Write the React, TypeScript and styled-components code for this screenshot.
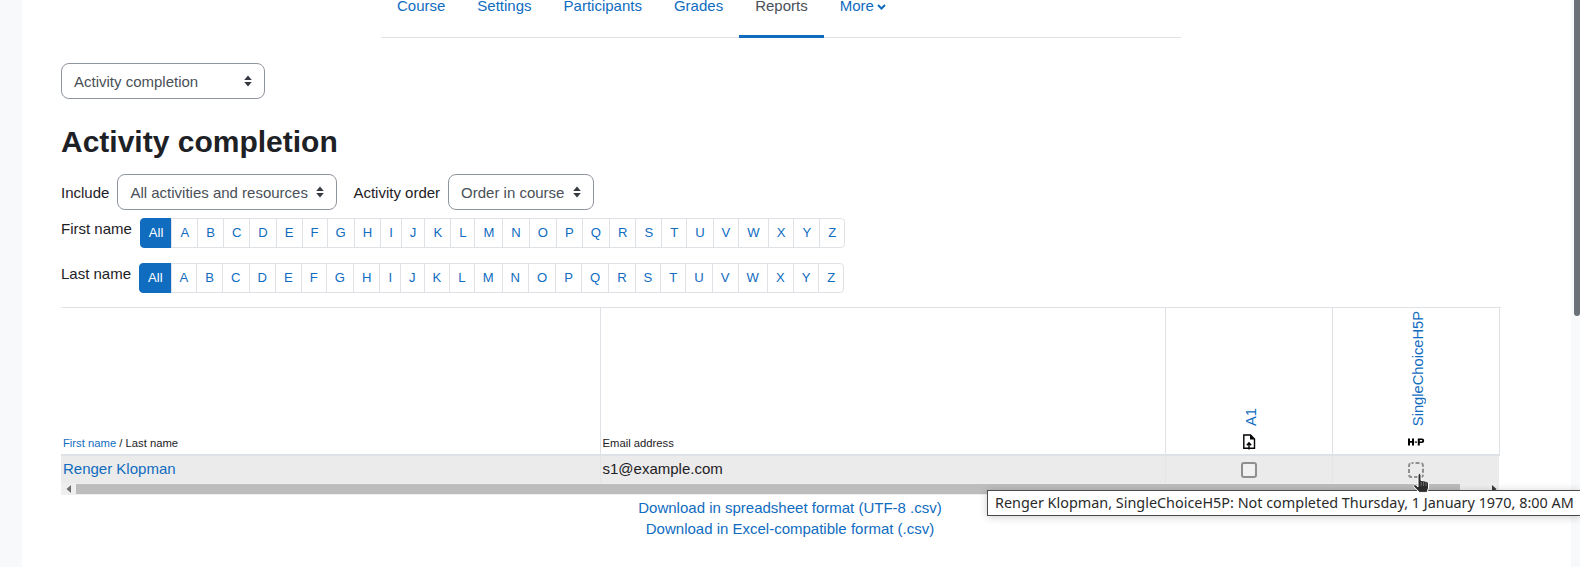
import styled, { createGlobalStyle } from "styled-components";

const GlobalStyle = createGlobalStyle`
  html, body {
    margin: 0;
    height: 100%;
    overflow: hidden;
    background: #f8f9fa;
  }
  * { box-sizing: border-box; }
`;

const TABS = ["Course", "Settings", "Participants", "Grades", "Reports"];
const LETTERS = ["All", ..."ABCDEFGHIJKLMNOPQRSTUVWXYZ".split("")];

function Caret() {
  return (
    <svg width="8" height="12" viewBox="0 0 8 12">
      <path d="M4 0.5 L7.8 5 H0.2 Z M4 11.5 L7.8 7 H0.2 Z" fill="#343a40" />
    </svg>
  );
}

function InitialsRow({ label }: { label: string }) {
  return (
    <InitialBar>
      <InitialLabel>{label}</InitialLabel>
      <Pager>
        {LETTERS.map((l) => (
          <PageItem key={l} $active={l === "All"}>
            {l}
          </PageItem>
        ))}
      </Pager>
    </InitialBar>
  );
}

export default function App() {
  return (
    <>
      <GlobalStyle />
      <Page>
        <Main>
          <NavWrap>
            <Nav>
              {TABS.map((t) => (
                <Tab key={t} $active={t === "Reports"}>
                  {t}
                </Tab>
              ))}
              <Tab>
                More
                <svg width="9" height="6" viewBox="0 0 9 6">
                  <path d="M1 1 L4.5 4.5 L8 1" fill="none" stroke="#0f6cbf" strokeWidth="2" />
                </svg>
              </Tab>
            </Nav>
          </NavWrap>

          <TopSelect>
            <ReportSelect $width={204}>
              Activity completion
              <Caret />
            </ReportSelect>
          </TopSelect>

          <Title>Activity completion</Title>

          <FilterRow>
            <span>Include</span>
            <ReportSelect $width={220}>
              All activities and resources
              <Caret />
            </ReportSelect>
            <OrderLabel>Activity order</OrderLabel>
            <ReportSelect $width={146}>
              Order in course
              <Caret />
            </ReportSelect>
          </FilterRow>

          <InitialsRow label="First name" />
          <InitialsRow label="Last name" />

          <TableWrap>
            <Table>
              <colgroup>
                <col style={{ width: 539 }} />
                <col style={{ width: 565 }} />
                <col style={{ width: 167 }} />
                <col style={{ width: 167 }} />
              </colgroup>
              <thead>
                <tr>
                  <HeadCell>
                    <a>First name</a> / Last name
                  </HeadCell>
                  <HeadCell>Email address</HeadCell>
                  <ActivityHead>
                    <ActivityInner>
                      <RotatedLink>A1</RotatedLink>
                      <svg width="14" height="16" viewBox="0 0 14 16">
                        <path
                          d="M1.8 1 H8.5 L12.5 5 V14.2 H1.8 Z"
                          fill="#fff"
                          stroke="#000"
                          strokeWidth="1.4"
                        />
                        <path d="M8 1 V5.5 H12.5 Z" fill="#000" />
                        <path d="M7 15.5 V9 M4.8 11.2 L7 8.8 L9.2 11.2" fill="none" stroke="#000" strokeWidth="1.4" />
                      </svg>
                    </ActivityInner>
                  </ActivityHead>
                  <ActivityHead>
                    <ActivityInner>
                      <RotatedLink>SingleChoiceH5P</RotatedLink>
                      <svg width="18" height="16" viewBox="0 0 18 16">
                        <path
                          d="M1 4.5 H3 V7 H5 V4.5 H7 V11.5 H5 V8.8 H3 V11.5 H1 Z M7.8 7.4 H10 V8.8 H7.8 Z M10.8 4.5 H15 Q17.2 4.5 17.2 6.8 Q17.2 9 15 9 H12.8 V11.5 H10.8 Z M12.8 6 V7.5 H14.6 Q15.3 7.5 15.3 6.8 Q15.3 6 14.6 6 Z"
                          fill="#000"
                        />
                      </svg>
                    </ActivityInner>
                  </ActivityHead>
                </tr>
              </thead>
              <tbody>
                <tr>
                  <BodyCell>
                    <a>Renger Klopman</a>
                  </BodyCell>
                  <BodyCell>s1@example.com</BodyCell>
                  <IconCell>
                    <StateBox />
                  </IconCell>
                  <IconCell>
                    <DashedBox width="16" height="16" viewBox="0 0 16 16">
                      <rect
                        x="1"
                        y="1"
                        width="14"
                        height="14"
                        rx="2.5"
                        fill="none"
                        stroke="#8f8f8f"
                        strokeWidth="2"
                        strokeDasharray="4 2"
                        strokeDashoffset="2"
                      />
                    </DashedBox>
                  </IconCell>
                </tr>
              </tbody>
            </Table>
            <ScrollBar>
              <svg width="6" height="8" viewBox="0 0 6 8">
                <path d="M5 0 V8 L0.5 4 Z" fill="#6f6f6f" />
              </svg>
              <ScrollThumb />
              <ScrollEnd>
                <svg width="6" height="8" viewBox="0 0 6 8">
                  <path d="M1 0 V8 L5.5 4 Z" fill="#3a3a3a" />
                </svg>
              </ScrollEnd>
            </ScrollBar>
          </TableWrap>

          <Downloads>
            <a>Download in spreadsheet format (UTF-8 .csv)</a>
            <a>Download in Excel-compatible format (.csv)</a>
          </Downloads>
        </Main>
        <PageScroll>
          <PageThumb />
        </PageScroll>

        <Tooltip>
          Renger Klopman, SingleChoiceH5P: Not completed Thursday, 1 January 1970, 8:00 AM
        </Tooltip>
        <Cursor width="16" height="20" viewBox="0 0 16 20">
          <path
            d="M5 2 Q5 .6 6.5 .6 Q8 .6 8 2 V7.5 Q15 8 15.5 10 V15 L14 19.4 H6.5 L.8 13.6 Q.2 12.4 1.3 11.8 Q2.4 11.4 3.2 12.3 L5 14 Z"
            fill="#2b2b2b"
            stroke="#fff"
            strokeWidth="1"
          />
          <path d="M8.2 9 V13 M10.6 9 V13 M13 9.4 V13" stroke="#8a8a8a" strokeWidth="0.7" />
        </Cursor>
      </Page>
    </>
  );
}

const Page = styled.div`
  position: relative;
  display: flex;
  height: 567px;
  padding-left: 22px;
  overflow: hidden;
  font-family: "Liberation Sans", Arial, sans-serif;
  font-size: 15px;
  color: #1d2125;

  a {
    color: #0f6cbf;
  }
`;

const Main = styled.main`
  width: 1549px;
  height: 567px;
  padding: 0 70px 0 39px;
  background: #fff;
`;

const NavWrap = styled.div`
  width: 800px;
  margin-left: 320px;
  border-bottom: 1px solid #dee2e6;
`;

const Nav = styled.nav`
  display: flex;
  height: 37px;
`;

const Tab = styled.div<{ $active?: boolean }>`
  display: flex;
  align-items: flex-start;
  gap: 3px;
  height: 38px;
  padding: 0 16px;
  line-height: 12px;
  color: ${(p) => (p.$active ? "#495057" : "#0f6cbf")};
  border-bottom: 3px solid ${(p) => (p.$active ? "#0f6cbf" : "transparent")};

  svg {
    margin-top: 4px;
  }
`;

const TopSelect = styled.div`
  padding-top: 25px;
`;

const ReportSelect = styled.div<{ $width: number }>`
  display: flex;
  align-items: center;
  justify-content: space-between;
  width: ${(p) => p.$width}px;
  height: 36px;
  padding: 0 12px 0 12px;
  color: #495057;
  background: #fff;
  border: 1px solid #8f959e;
  border-radius: 8px;
  flex-shrink: 0;
`;

const Title = styled.h2`
  margin: 25px 0 14px;
  font-size: 30px;
  line-height: 36px;
  font-weight: 700;
`;

const FilterRow = styled.div`
  display: flex;
  align-items: center;
  gap: 8px;
`;

const OrderLabel = styled.span`
  margin-left: 8px;
`;

const InitialBar = styled.div`
  display: flex;
  align-items: flex-start;
  gap: 8px;
  margin-top: 9px;
  height: 36px;
`;

const InitialLabel = styled.span`
  line-height: 20px;
`;

const Pager = styled.div`
  display: flex;
  margin-top: -1px;
  font-size: 13.1px;
  line-height: 19.7px;
`;

const PageItem = styled.span<{ $active?: boolean }>`
  padding: 4px 8px;
  margin-left: -1px;
  color: ${(p) => (p.$active ? "#fff" : "#0f6cbf")};
  background: ${(p) => (p.$active ? "#0f6cbf" : "#fff")};
  border: 1px solid ${(p) => (p.$active ? "#0f6cbf" : "#dee2e6")};

  &:first-child {
    border-radius: 4px 0 0 4px;
    margin-left: 0;
  }

  &:last-child {
    border-radius: 0 4px 4px 0;
  }
`;

const TableWrap = styled.div`
  margin-top: 7px;
  border-top: 1px solid #dee2e6;
`;

const Table = styled.table`
  width: 1438px;
  table-layout: fixed;
  border-collapse: collapse;
`;

const HeadCell = styled.th`
  height: 147px;
  padding: 0 2px 3px;
  vertical-align: bottom;
  text-align: left;
  font-size: 11.25px;
  line-height: 16px;
  font-weight: 400;
  border-left: 1px solid #dee2e6;
  border-bottom: 2px solid #dee2e6;

  &:first-child {
    border-left: 0;
  }
`;

const ActivityHead = styled(HeadCell)`
  padding: 0 0 4px;
  border-right: 1px solid #dee2e6;
`;

const ActivityInner = styled.div`
  display: flex;
  flex-direction: column;
  align-items: center;
  gap: 8px;
`;

const RotatedLink = styled.a`
  margin-left: 4px;
  writing-mode: vertical-rl;
  transform: rotate(180deg);
  font-size: 14.7px;
  line-height: 20px;
  color: #0f6cbf;
`;

const BodyCell = styled.td`
  height: 28px;
  padding: 0 2px 2px;
  background: #ebebeb;
  font-size: 15px;
  line-height: 24px;
  border-left: 1px solid #e4e4e4;

  &:first-child {
    border-left: 0;
  }
`;

const IconCell = styled(BodyCell)`
  padding: 0 2px;
  text-align: center;
`;

const StateBox = styled.span`
  display: block;
  width: 16px;
  height: 16px;
  margin: 1px auto 0;
  background: #f1f1f1;
  border: 2px solid #8f8f8f;
  border-radius: 3px;
`;

const DashedBox = styled.svg`
  display: block;
  margin: 1px auto 0;
`;

const ScrollBar = styled.div`
  display: flex;
  align-items: center;
  width: 1438px;
  height: 12px;
  padding-left: 5px;
  background: #efefef;
`;

const ScrollThumb = styled.div`
  width: 1384px;
  height: 10px;
  margin-left: 4px;
  background: #bdbdbd;
`;

const ScrollEnd = styled.div`
  display: flex;
  margin-left: 31px;
`;

const Downloads = styled.div`
  display: flex;
  flex-direction: column;
  align-items: center;
  gap: 4px;
  padding-left: 18px;
  margin-top: 4px;
  line-height: 17px;
`;

const PageScroll = styled.div`
  flex: 1;
  padding-left: 3px;
  background: #f8f9fa;
`;

const PageThumb = styled.div`
  width: 6px;
  height: 316px;
  background: #6a7178;
  border-radius: 0 0 3px 3px;
`;

const Cursor = styled.svg`
  position: absolute;
  left: 1413px;
  top: 473px;
`;

const Tooltip = styled.div`
  position: absolute;
  left: 987px;
  top: 490px;
  width: 593px;
  height: 26px;
  padding-left: 7px;
  font-family: "Noto Sans", sans-serif;
  font-size: 14.4px;
  line-height: 24px;
  white-space: nowrap;
  color: #2a2a2a;
  background: #fff;
  border: 1px solid #4a4a4a;
  border-right: 0;
  box-shadow: 0 1px 8px rgba(0, 0, 0, 0.2);
`;
